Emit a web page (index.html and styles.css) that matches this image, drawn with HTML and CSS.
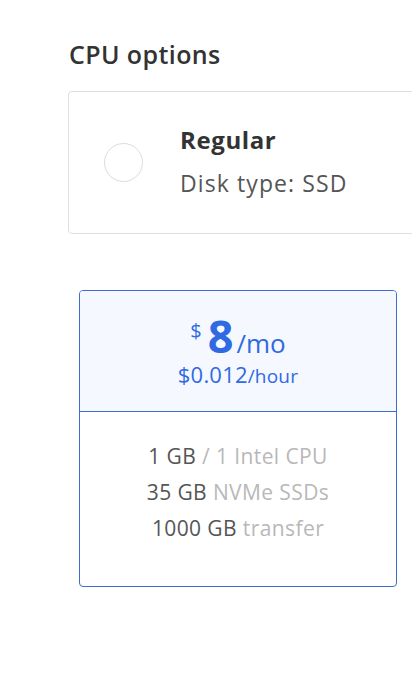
FILE: index.html
```html
<!DOCTYPE html>
<html>
<head>
<meta charset="utf-8">
<link rel="stylesheet" href="styles.css">
</head>
<body>
<div class="page">
  <h2 class="title">CPU options</h2>
  <div class="option">
    <span class="radio"></span>
    <div class="option-text">
      <div class="option-name">Regular</div>
      <div class="option-sub">Disk type: SSD</div>
    </div>
  </div>
  <div class="plan">
    <div class="plan-head">
      <div class="price"><span class="cur">$</span><span class="amt">8</span><span class="per">/mo</span></div>
      <div class="hourly">$0.012<span class="per-h">/hour</span></div>
    </div>
    <div class="plan-body">
      <div class="spec">1 GB <span class="muted">/ 1 Intel CPU</span></div>
      <div class="spec">35 GB <span class="muted">NVMe SSDs</span></div>
      <div class="spec">1000 GB <span class="muted">transfer</span></div>
    </div>
  </div>
</div>
</body>
</html>
```
FILE: styles.css
```css
html, body { margin: 0; padding: 0; background: #fff; }
body { font-family: "Open Sans", "Liberation Sans", sans-serif; color: #333; overflow: hidden; width: 412px; }
.page { padding: 36px 0 0 68px; }
.title { margin: 0 0 0 1px; font-size: 25px; font-weight: 600; color: #333; line-height: 36px; letter-spacing: 0.4px; }
.option {
  margin-top: 19px;
  width: 420px;
  height: 143px;
  border: 1px solid #dfdfdf;
  border-radius: 4px;
  display: flex;
  align-items: center;
  box-sizing: border-box;
}
.radio {
  width: 39px; height: 39px; border-radius: 50%;
  border: 1px solid #dcdcdc; box-sizing: border-box;
  margin-left: 35px; margin-right: 37px; flex: none;
}
.option-text { padding-bottom: 4px; }
.option-name { font-size: 24px; font-weight: 700; color: #333; line-height: 32px; letter-spacing: 0.6px; }
.option-sub { font-size: 23px; color: #555; line-height: 30px; margin-top: 12px; letter-spacing: 1.1px; }
.plan {
  margin: 56px 0 0 11px;
  width: 318px; height: 297px;
  border: 1px solid #3d6ccd;
  border-radius: 4px;
  box-sizing: border-box;
  display: flex; flex-direction: column;
  overflow: hidden;
}
.plan-head {
  background: #f5f8fe;
  height: 121px;
  flex: none;
  border-bottom: 1px solid #3d6ccd;
  box-sizing: border-box;
  text-align: center;
  color: #2f6ae2;
  padding-top: 18px;
}
.price { line-height: 44px; }
.cur { font-size: 20px; vertical-align: 15px; margin-right: 6px; }
.amt { font-size: 45px; font-weight: 700; }
.per { font-size: 26px; margin-left: 3px; }
.hourly { font-size: 22px; line-height: 26px; letter-spacing: 0.2px; margin-top: -8px; }
.per-h { font-size: 19px; }
.plan-body { padding-top: 26px; text-align: center; }
.spec { font-size: 21px; line-height: 36px; color: #555; letter-spacing: 0.4px; }
.muted { color: #b8b8b8; }
```
